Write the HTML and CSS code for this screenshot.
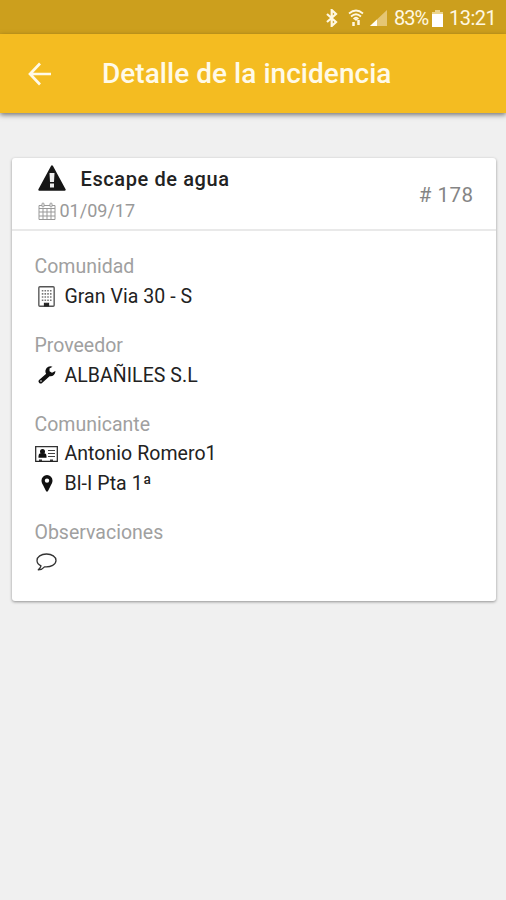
FILE: index.html
```html
<!DOCTYPE html>
<html lang="es">
<head>
<meta charset="utf-8">
<title>Detalle de la incidencia</title>
<link rel="stylesheet" href="styles.css">
</head>
<body>
<div class="status">
  <svg class="bt" width="12" height="18" viewBox="0 0 12 18"><path d="M1 5l9 8-4.300 4V1L10 5l-9 8" fill="none" stroke="#fff8e2" stroke-width="2.200"/></svg>
  <svg class="wifi" width="16" height="18" viewBox="0 0 16 18"><g fill="none" stroke="#fff8e2" stroke-width="1.700"><path d="M1 4.500Q8-1.500 15 4.500M3 7.500Q8 3 13 7.500M5.500 10Q8 7.500 10.500 10"/></g><path d="M6 10h4l-2 2z" fill="#fff8e2"/><path d="M5.500 13v4M10.500 11v5" stroke="#fff8e2" stroke-width="2.500"/></svg>
  <svg class="signal" width="18" height="18" viewBox="0 0 18 18"><path d="M0 17L17 1v16z" fill="#e5c674"/><path d="M0 17l7-6.600V17z" fill="#fffdf5"/></svg>
  <span class="pct">83%</span>
  <svg class="battery" width="11" height="17" viewBox="0 0 11 17"><path d="M3 0h5v2h3v3H0V2h3z" fill="#ecd48d"/><path d="M0 4h11v13H0z" fill="#fff"/></svg>
  <span class="time">13:21</span>
</div>
<header class="bar">
  <svg class="back" width="24" height="24" viewBox="0 0 24 24"><path d="M12 1.500L2 12l10 10.500M2 12h21" fill="none" stroke="#fffae8" stroke-width="2.700"/></svg>
  <h1>Detalle de la incidencia</h1>
</header>
<main class="card">
  <div class="head">
    <div class="summary">
      <div class="name">
        <svg width="28" height="26" viewBox="0 0 28 26"><path d="M14 1.300L26.700 24.700H1.300z" fill="#161616" stroke="#161616" stroke-width="2" stroke-linejoin="round"/><path d="M11.500 8h5l-.5 9h-4zM12 18.500h4v4h-4z" fill="#eee"/></svg>
        <h2>Escape de agua</h2>
      </div>
      <div class="date">
        <svg width="18" height="18" viewBox="0 0 18 18" fill="none" stroke="#999"><path d="M1 3.500h16v14H1zM1 6.500h16M5 6.500v11M9 6.500v11M13 6.500v11M1 10h16M1 14h16"/><rect x="4" y="1" width="2" height="4" rx="1" fill="#fff"/><rect x="12" y="1" width="2" height="4" rx="1" fill="#fff"/></svg>
        <span>01/09/17</span>
      </div>
    </div>
    <span class="num"># 178</span>
  </div>
  <div class="body">
    <section>
      <h3>Comunidad</h3>
      <p><i><svg width="17" height="21" viewBox="0 0 16 20"><rect x=".7" y=".7" width="14.600" height="18.600" rx="1" fill="none" stroke="#555" stroke-width="1.300"/><path d="M3.500 4.500h9.500M3.500 7.500h9.500M3.500 10.500h9.500M3.500 13.500h9.500" stroke="#777" stroke-width="1.500" stroke-dasharray="1.500 1.100"/><path d="M6 19v-2.500h4V19z" fill="#222" stroke="#222"/></svg></i><span>Gran Via 30 - S</span></p>
    </section>
    <section>
      <h3>Proveedor</h3>
      <p><i><svg width="18" height="18" viewBox="0 0 18 18"><path d="M2.700 15.300L11 8" stroke="#111" stroke-width="4.200" stroke-linecap="round"/><path d="M14.500.7A5 5 0 1 0 17.400 5L14 6.800 11.500 5.300V2.500z" fill="#111"/><circle cx="3" cy="15" r=".8" fill="#fff"/></svg></i><span>ALBAÑILES S.L</span></p>
    </section>
    <section>
      <h3>Comunicante</h3>
      <p><i><svg width="23" height="17" viewBox="0 0 23 17"><path d="M.7 1.500h21.600v14.800H.7z" fill="none" stroke="#222" stroke-width="1.200"/><path d="M.7 1h21.600v1.300H.7zM4 14.500h3v1.500H4zM15 14.500h3v1.500h-3z" fill="#333"/><circle cx="7.500" cy="6.500" r="2.500" fill="#111"/><path d="M3.500 12.800V11q0-2.500 2-2.800h4q2 .3 2 2.800v1.800z" fill="#111"/><path d="M13 5.500h7M13 8.500h7M13 11.500h7" stroke="#444" stroke-width="1.200"/></svg></i><span>Antonio Romero1</span></p>
      <p><i><svg width="12" height="17" viewBox="0 0 12 17"><path fill-rule="evenodd" d="M6 0a5.500 5.500 0 0 0-5.500 5.700C.5 7.500 1.500 9 2 10l3 6q1 1.500 2 0l3-6c.5-1 1.500-2.500 1.500-4.300A5.500 5.500 0 0 0 6 0zM6 3.400a2.200 2.200 0 1 1 0 4.400A2.200 2.200 0 0 1 6 3.400z" fill="#111"/></svg></i><span>Bl-I Pta 1ª</span></p>
    </section>
    <section>
      <h3>Observaciones</h3>
      <p><i><svg width="21" height="18" viewBox="0 0 21 18"><path d="M10.500 1C5 1 1 3.800 1 7.500c0 2.300 1.500 4.200 4 5.300-.4 1.700-1.300 2.800-2.700 4 2.700-.2 4.800-1.200 6.200-3 6.500.6 11.500-2.300 11.500-6.300C20 3.800 16 1 10.500 1z" fill="none" stroke="#333" stroke-width="1.300" stroke-linejoin="round"/></svg></i></p>
    </section>
  </div>
</main>
</body>
</html>
```
FILE: styles.css
```css
* { box-sizing: border-box; }
body {
  margin: 0;
  height: 900px;
  background: #f0f0f0;
  font-family: Roboto, sans-serif;
  color: #222;
  overflow: hidden;
}
h1, h2, h3, p { margin: 0; font-weight: 400; }
svg { display: block; flex: none; }
span, h1, h2, h3 { white-space: nowrap; }
.status {
  height: 34px;
  padding: 2px 11px 0 0;
  background: #cc9f1d;
  color: #fff8e2;
  display: flex;
  justify-content: flex-end;
  align-items: center;
  font-size: 20px;
}
.wifi { margin-left: 10px; }
.signal { margin-left: 6px; }
.pct { margin-left: 6px; width: 34px; letter-spacing: -1px; }
.battery { margin-left: 4px; }
.time { margin-left: 6px; width: 46px; letter-spacing: -.5px; }
.bar {
  height: 79px;
  padding-left: 28px;
  background: #f4bc21;
  box-shadow: 0 2px 5px rgba(0, 0, 0, .5);
  display: flex;
  align-items: center;
}
.bar h1 {
  margin-left: 50px;
  font-size: 28px;
  font-weight: 500;
  letter-spacing: .04px;
  color: #fffae8;
}
.card {
  width: 484px;
  height: 443px;
  margin: 45px 0 0 11.500px;
  background: #fff;
  border-radius: 3px;
  box-shadow: 0 1px 3px rgba(0, 0, 0, .4);
}
.head {
  height: 73px;
  padding: 0 22px 0 26px;
  border-bottom: 2px solid #e9e9e9;
  display: flex;
  justify-content: space-between;
  align-items: center;
}
.summary { height: 68px; }
.name { display: flex; align-items: center; height: 38px; }
.name svg { margin-bottom: 2px; }
.name h2 { margin-left: 15px; padding-top: 1px; font-size: 20px; font-weight: 500; letter-spacing: .6px; }
.date {
  height: 26px;
  display: flex;
  align-items: center;
  color: #999;
  font-size: 18px;
}
.date span { margin-left: 4px; }
.num { padding-top: 2px; font-size: 20.500px; letter-spacing: .5px; color: #858585; }
.body { padding: 21px 23px; }
section { margin-bottom: 20px; }
h3, p { height: 29.400px; line-height: 29.400px; font-size: 19.500px; }
h3 { color: #a0a0a0; }
p { display: flex; align-items: center; }
p span { padding-top: 1px; letter-spacing: .05px; }
i { width: 24px; margin-right: 6px; display: flex; justify-content: center; }
```
